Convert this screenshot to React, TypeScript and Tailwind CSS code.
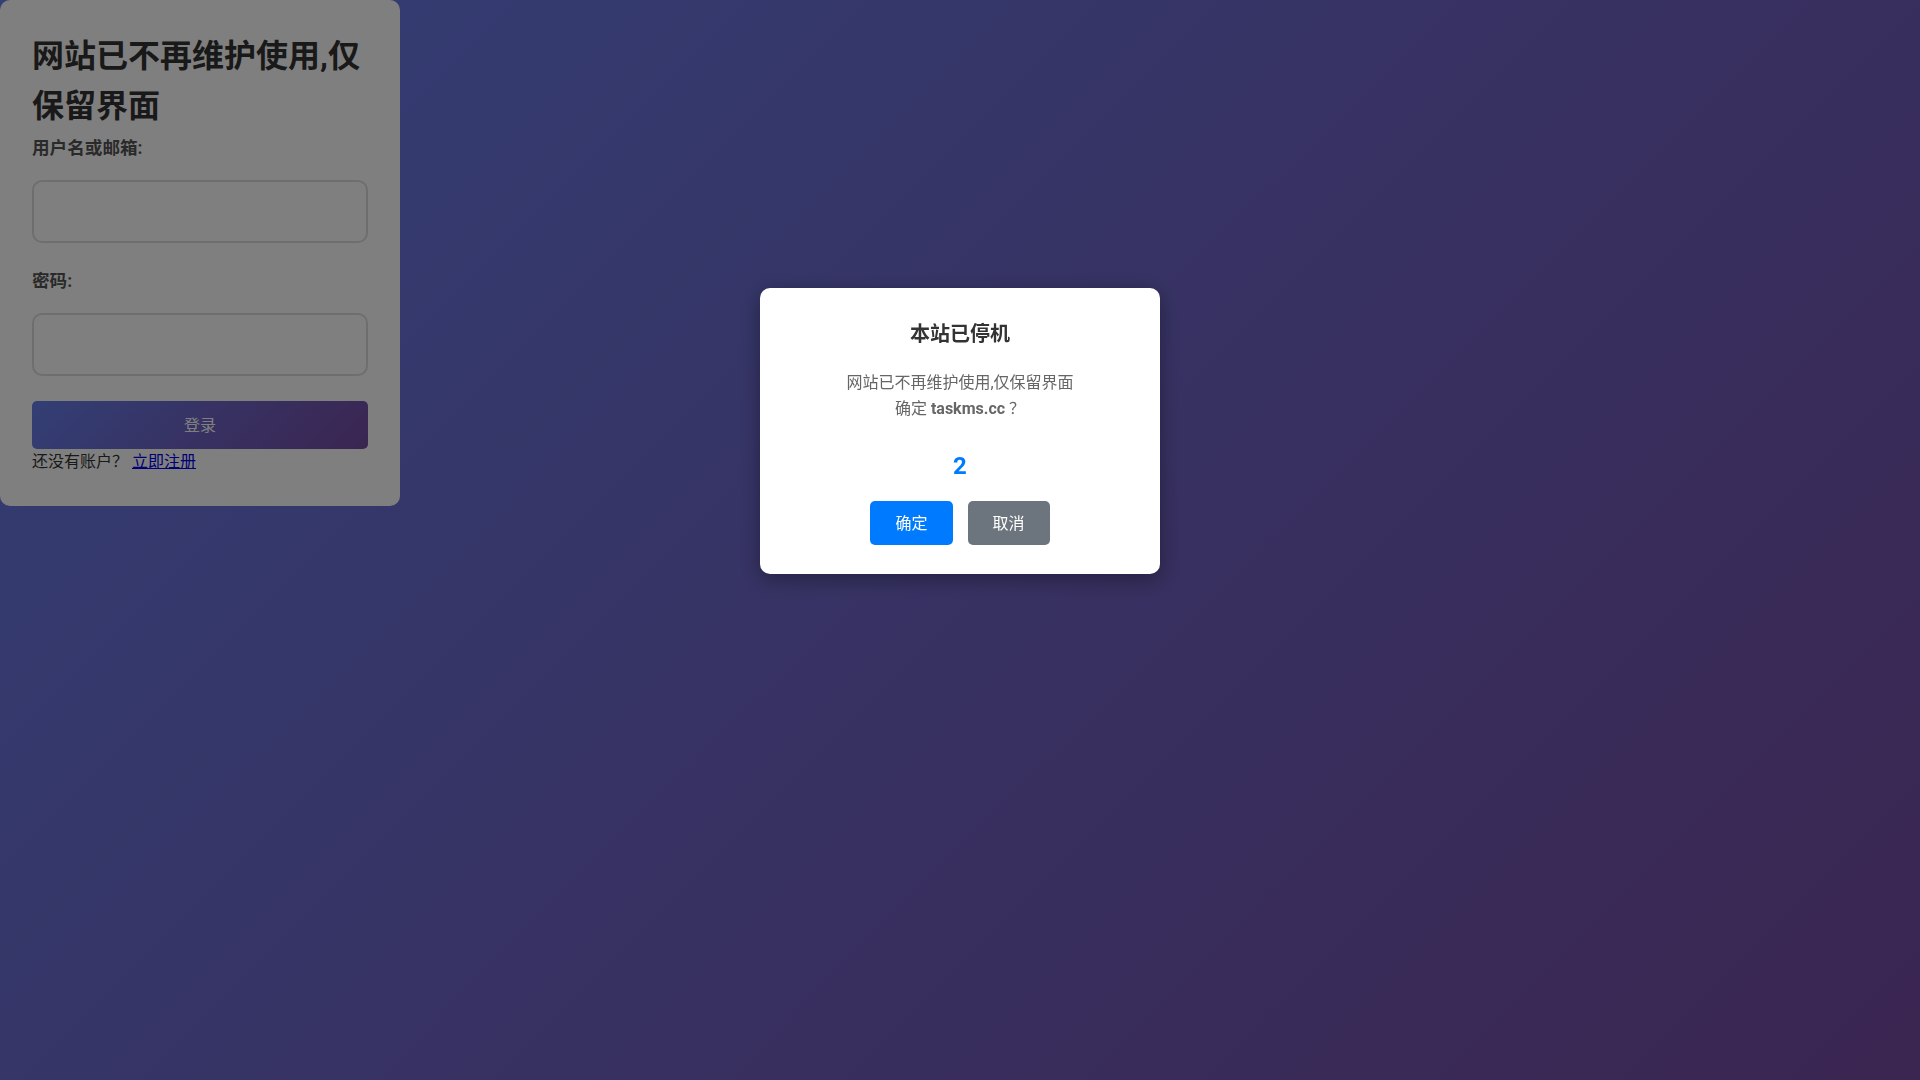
import React from "react";

export default function App() {
  return (
    <div
      className="relative min-h-screen w-full bg-[linear-gradient(135deg,#667eea_0%,#764ba2_100%)]"
      style={{ fontFamily: 'Roboto, "Noto Sans CJK SC", sans-serif' }}
    >
      {/* Login card */}
      <div className="w-[400px] rounded-[10px] bg-white px-8 pt-[31px] pb-8">
        <h1 className="text-[32px] font-bold leading-[50px] text-[#333]">
          网站已不再维护使用,仅保留界面
        </h1>
        <label className="mt-[5px] block text-[17.6px] font-bold leading-6 text-[#555]">
          用户名或邮箱:
        </label>
        <div className="mt-[20px] h-[63px] w-full rounded-[10px] border-2 border-[#ddd] bg-white" />
        <label className="mt-[26px] block text-[17.6px] font-bold leading-6 text-[#555]">
          密码:
        </label>
        <div className="mt-[20px] h-[63px] w-full rounded-[10px] border-2 border-[#ddd] bg-white" />
        <button className="mt-[25px] flex h-[48px] w-full items-center justify-center rounded-[5px] bg-[linear-gradient(135deg,#667eea_0%,#764ba2_100%)] pt-[2px] text-[16px] text-white">
          登录
        </button>
        <p className="mt-[1px] text-[16px] leading-6 text-[#333]">
          还没有账户？{" "}
          <a className="text-[#0000ee] underline" href="#">
            立即注册
          </a>
        </p>
      </div>

      {/* Overlay */}
      <div className="fixed inset-0 flex items-start justify-center bg-black/50 pt-[288px]">
        <div className="w-[400px] rounded-[10px] bg-white px-[30px] pt-[31px] pb-[29px] text-center shadow-[0_5px_20px_rgba(0,0,0,0.35)]">
          <h2 className="text-[20px] font-bold leading-[30px] text-[#333]">本站已停机</h2>
          <p className="mt-[21px] text-[16px] leading-[25.6px] text-[#666]">
            网站已不再维护使用,仅保留界面
            <br />
            确定 <strong className="font-bold">taskms.cc</strong> ？
          </p>
          <div className="mt-[27px] text-[24px] font-bold leading-[36px] text-[#007bff]">2</div>
          <div className="mt-[17px] flex justify-center gap-[15px]">
            <button className="rounded-[5px] bg-[#007bff] px-[25px] pt-[11px] pb-[9px] text-[16px] leading-6 text-white">
              确定
            </button>
            <button className="rounded-[5px] bg-[#6c757d] px-[25px] pt-[11px] pb-[9px] text-[16px] leading-6 text-white">
              取消
            </button>
          </div>
        </div>
      </div>
    </div>
  );
}
